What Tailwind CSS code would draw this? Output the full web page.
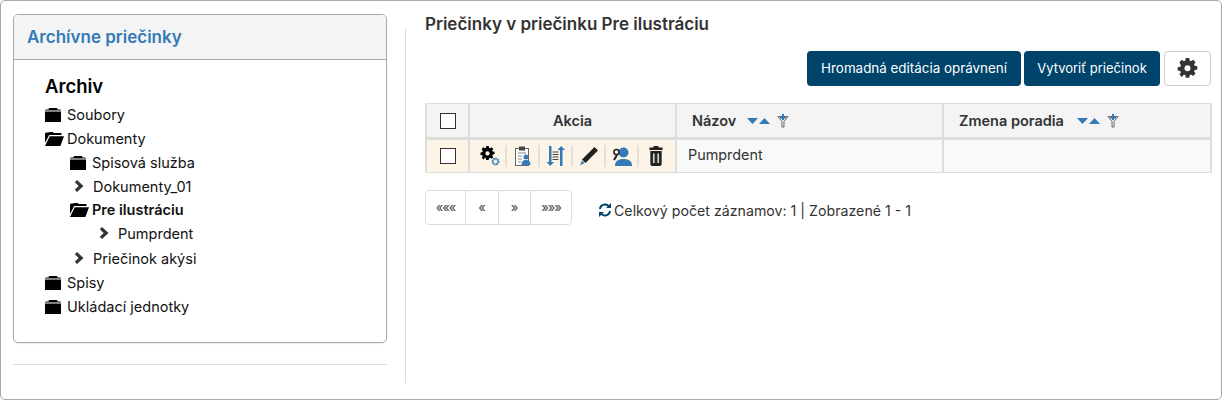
<!DOCTYPE html>
<html lang="sk">
<head>
    <meta charset="UTF-8">
    <title>Archívne priečinky</title>
    <script src="https://cdn.jsdelivr.net/npm/@tailwindcss/browser@4"></script>
</head>
<body class="bg-white font-['Inter','Liberation_Sans',sans-serif] text-[#222]">
    <svg class="hidden">
        <symbol id="folder" viewBox="0 0 16 14"><path fill="currentColor" d="M0 3.4h16V14H0zM0 2.6V2l1-.6h2.6V.6L4.4 0h7.2l.8.6v.8H15l1 .6v.6z"/></symbol>
        <symbol id="folder-open" viewBox="0 0 19 14"><path fill="currentColor" d="M0 1.6 1 .6h2.4L4 0h4l.6 1h7.2l.8.8V3H4.2L0 11zM4.8 4.2H19L15.4 14H0z"/></symbol>
        <symbol id="chevron" viewBox="0 0 11 12"><path fill="#333" d="M3 0 9.5 6 3 12 .8 9.8 4.7 6 .8 2.2z"/></symbol>
        <symbol id="cog" viewBox="0 0 20 20"><path fill="currentColor" fill-rule="evenodd" d="M8 0h4l.5 3 1.6.7L16.600 2l2.800 2.800-1.700 2.500.7 1.700 3 .5v4l-3 .5-.7 1.600 1.700 2.500-2.800 2.800-2.500-1.700-1.600.7-.5 3H8l-.5-3-1.600-.7L3.400 22 .6 19.200l1.700-2.500-.7-1.600-3-.5v-4l3-.5.7-1.700L.6 4.800 3.400 2l2.500 1.700L7.500 3zM10 8.500a3.500 3.500 0 1 0 0 7 3.500 3.500 0 0 0 0-7z" transform="translate(1.800 0) scale(.82)"/></symbol>
        <symbol id="sort" viewBox="0 0 24 8"><path fill="#337ab7" d="M0 1h11L5.500 7zM12 7 17.500 1 23 7z"/></symbol>
        <symbol id="filter" viewBox="0 0 12 14"><path fill="none" stroke="#666" d="M1 2.500h10L7 7.500V13H5V7.500z"/><path fill="#337ab7" d="M5 0h2v6H5zM3 3h6v1.500H3z"/></symbol>
    </svg>

    <div class="w-[1222px] h-[400px] border border-[#aaa] rounded-[5px] flex pt-[13px] pl-3 overflow-hidden">
        <aside class="w-[374px] shrink-0">
            <div class="h-[329px] border border-[#aaa] rounded-[5px] shadow-[0_1px_1px_rgba(0,0,0,0.08)] overflow-hidden">
                <div class="h-[45px] bg-[#f4f4f4] border-b border-[#aaa] pl-[13px] flex items-center">
                    <h2 class="text-[17px] leading-none font-semibold text-[#337ab7]">Archívne priečinky</h2>
                </div>
                <div class="pl-[31px] pt-[15px] text-[14.500px] text-[#111]">
                    <div class="text-[18.500px] leading-[22px] font-semibold text-black mb-[6px]">Archiv</div>
                    <div class="h-6 flex items-center gap-[6px]"><svg class="w-4 h-[14px] text-black"><use href="#folder"/></svg>Soubory</div>
                    <div class="h-6 flex items-center gap-[3px]"><svg class="w-[19px] h-[14px] text-black"><use href="#folder-open"/></svg>Dokumenty</div>
                    <div class="pl-[25px]">
                        <div class="h-6 flex items-center gap-[6px]"><svg class="w-4 h-[14px] text-black"><use href="#folder"/></svg>Spisová služba</div>
                        <div class="h-[23px] flex items-center gap-[8px] pl-[4px]"><svg class="w-[11px] h-3 -mt-[2px]"><use href="#chevron"/></svg>Dokumenty_01</div>
                        <div class="h-[23px] flex items-center gap-[3px] font-semibold"><svg class="w-[19px] h-[14px] text-black"><use href="#folder-open"/></svg>Pre ilustráciu</div>
                        <div class="h-[25px] flex items-center gap-[8px] pl-[29px]"><svg class="w-[11px] h-3 -mt-[2px]"><use href="#chevron"/></svg>Pumprdent</div>
                        <div class="h-6 pt-[2px] flex items-center gap-[8px] pl-[4px]"><svg class="w-[11px] h-3 -mt-[2px]"><use href="#chevron"/></svg>Priečinok akýsi</div>
                    </div>
                    <div class="h-[25px] flex items-center gap-[6px]"><svg class="w-4 h-[14px] text-black"><use href="#folder"/></svg>Spisy</div>
                    <div class="h-6 flex items-center gap-[6px]"><svg class="w-4 h-[14px] text-black"><use href="#folder"/></svg>Ukládací jednotky</div>
                </div>
            </div>
            <div class="mt-[21px] border-t border-[#ddd]"></div>
        </aside>

        <div class="ml-[18px] mt-[14px] h-[355px] border-l border-[#ddd]"></div>

        <main class="ml-[19px] w-[786px] shrink-0">
            <h1 class="text-[17px] leading-5 font-semibold text-[#333] mb-[17px]">Priečinky v priečinku Pre ilustráciu</h1>
            <div class="flex justify-end gap-[3px] h-[35px]">
                <button class="w-[214px] bg-[#00446b] text-white text-[13.400px] rounded-[4px]">Hromadná editácia oprávnení</button>
                <button class="w-[136px] bg-[#00446b] text-white text-[13px] rounded-[4px]">Vytvoriť priečinok</button>
                <button class="ml-[1px] w-[47px] border border-[#ccc] rounded-[4px] flex items-center justify-center"><svg class="w-[21px] h-[21px] text-[#333]"><use href="#cog"/></svg></button>
            </div>

            <table class="mt-[17px] w-[785px] table-fixed border-collapse text-[14.500px] text-[#333]">
                <colgroup><col class="w-[43px]"><col class="w-[207px]"><col class="w-[267px]"><col class="w-[268px]"></colgroup>
                <thead>
                    <tr class="h-[35px] bg-[#f4f4f4]">
                        <th class="border border-b-[3px] border-x-2 border-[#ddd]"><span class="block mx-auto w-4 h-4 border border-[#333] bg-white"></span></th>
                        <th class="border border-b-[3px] border-x-2 border-[#ddd] font-semibold">Akcia</th>
                        <th class="border border-b-[3px] border-x-2 border-[#ddd] font-semibold text-left pl-[15px]"><span class="flex items-center gap-[11px]">Názov <span class="flex items-center gap-[6px]"><svg class="w-6 h-2"><use href="#sort"/></svg><svg class="w-3 h-[14px]"><use href="#filter"/></svg></span></span></th>
                        <th class="border border-b-[3px] border-x-2 border-[#ddd] font-semibold text-left pl-[15px]"><span class="flex items-center gap-[13px]">Zmena poradia <span class="flex items-center gap-[6px]"><svg class="w-6 h-2"><use href="#sort"/></svg><svg class="w-3 h-[14px]"><use href="#filter"/></svg></span></span></th>
                    </tr>
                </thead>
                <tbody>
                    <tr class="h-[34px]">
                        <td class="bg-[#fcf4e6] border border-x-2 border-[#ddd]"><span class="block mx-auto w-4 h-4 border border-[#333] bg-white"></span></td>
                        <td class="bg-[#fcf4e6] border border-x-2 border-[#ddd] pl-[4px]">
                            <div class="flex items-center divide-x-2 divide-[#e4e0d8] h-[22px]">
                                <span class="w-[33px] h-full flex items-center justify-center">
                                    <svg viewBox="0 0 20 20" class="w-5 h-5"><use href="#cog" width="15" height="15" x="0" y="0" class="text-black"/><circle cx="15.500" cy="15.500" r="2.800" fill="none" stroke="#337ab7" stroke-width="2.200" stroke-dasharray="1.500 .6"/></svg>
                                </span>
                                <span class="w-[33px] h-full flex items-center justify-center">
                                    <svg viewBox="0 0 16 20" class="w-4 h-5"><rect x=".5" y="2.500" width="13" height="17" fill="#fff" stroke="#666"/><rect x="4" y=".5" width="6" height="4" fill="#444"/><path stroke="#888" d="M3 7h8M3 10h4M3 13h4M3 16h3"/><circle cx="11" cy="11" r="2.500" fill="#337ab7"/><path fill="#337ab7" d="M6.500 19c0-4 2-5 4.500-5s4.500 1 4.500 5z"/></svg>
                                </span>
                                <span class="w-[33px] h-full flex items-center justify-center">
                                    <svg viewBox="0 0 20 20" class="w-5 h-5"><path fill="#337ab7" d="M3 0h2.500v16H8l-3.750 4-3.750-4H3zM16.500 4H19l-3.750-4-3.750 4H14v16h2.500z"/><path stroke="#444" stroke-width="1.200" d="M6.500 6h6M6.500 8.500h6M6.500 11h6M6.500 13.500h6"/></svg>
                                </span>
                                <span class="w-[33px] h-full flex items-center justify-center">
                                    <svg viewBox="0 0 20 20" class="w-5 h-5"><path fill="#222" d="M15.500 1 19 4.500 6.500 17 3 13.500z"/><path fill="#337ab7" d="M3 14.500 5.500 17 1 19.500z"/></svg>
                                </span>
                                <span class="w-[33px] h-full flex items-center justify-center">
                                    <svg viewBox="0 0 20 20" class="w-5 h-5"><circle cx="11.500" cy="6.500" r="5" fill="#337ab7"/><path fill="#337ab7" d="M3 20c0-5 3-7 8.500-7s8.500 2 8.500 7z"/><circle cx="4.500" cy="6" r="2.600" fill="none" stroke="#222" stroke-width="1.500"/><path stroke="#222" stroke-width="2" d="M5 9 2 14"/></svg>
                                </span>
                                <span class="w-[33px] h-full flex items-center justify-center">
                                    <svg viewBox="0 0 16 20" class="w-[14px] h-5" preserveAspectRatio="none"><path fill="#222" d="M5.500 0h5l.5 1.500h4.500V4H.5V1.500H5zM1.500 5h13v13.500L13 20H3l-1.500-1.500z"/><path fill="#ccc" d="M4.500 7.500h2V17h-2zM9.500 7.500h2V17h-2z"/></svg>
                                </span>
                            </div>
                        </td>
                        <td class="bg-[#f9f9f9] border border-x-2 border-[#ddd] pl-[11px] pb-[3px] text-[14.400px]">Pumprdent</td>
                        <td class="bg-[#f9f9f9] border border-x-2 border-[#ddd]"></td>
                    </tr>
                </tbody>
            </table>

            <div class="mt-[17px] flex items-center">
                <div class="flex h-[35px] border border-[#ddd] rounded-[4px] text-[13px] text-[#444] divide-x divide-[#ddd]">
                    <span class="w-[40px] flex items-center justify-center tracking-[-1px]">«««</span>
                    <span class="w-[33px] flex items-center justify-center">«</span>
                    <span class="w-[32px] flex items-center justify-center">»</span>
                    <span class="w-[40px] flex items-center justify-center tracking-[-1px]">»»»</span>
                </div>
                <div class="ml-[26px] mt-[6px] flex items-center gap-[2px] text-[14.200px] text-[#333]">
                    <svg viewBox="0 0 14 14" class="w-[14px] h-[14px]" fill="none" stroke="#00446b" stroke-width="2"><path d="M2 6a5 5 0 0 1 9-2.500M12 8a5 5 0 0 1-9 2.500"/><path fill="#00446b" stroke="none" d="M13 0v5H8zM1 14V9h5z"/></svg>
                    Celkový počet záznamov: 1 | Zobrazené 1 - 1
                </div>
            </div>
        </main>
    </div>
</body>
</html>
